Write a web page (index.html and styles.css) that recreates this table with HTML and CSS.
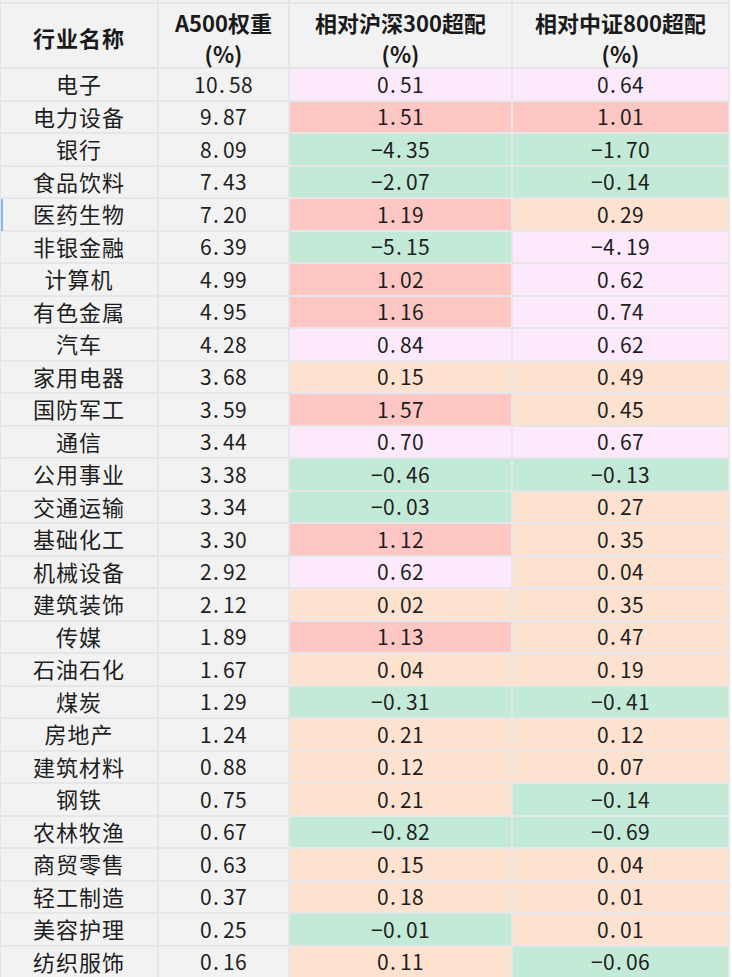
FILE: index.html
```html
<!DOCTYPE html>
<html lang="zh-CN">
<head>
<meta charset="utf-8">
<title>A500 行业权重</title>
<link rel="stylesheet" href="styles.css">
</head>
<body>
<div class="sheet">
  <div class="cap"></div><div class="cap"></div><div class="cap"></div><div class="cap"></div>

  <div class="hd hd-first"><span>行业名称</span></div>
  <div class="hd"><span>A500权重</span><span>(%)</span></div>
  <div class="hd"><span>相对沪深300超配</span><span>(%)</span></div>
  <div class="hd"><span>相对中证800超配</span><span>(%)</span></div>

  <div class="nm">电子</div><div class="num">10<span class="p">.</span>58</div><div class="num lav">0<span class="p">.</span>51</div><div class="num lav">0<span class="p">.</span>64</div>
  <div class="nm">电力设备</div><div class="num">9<span class="p">.</span>87</div><div class="num red">1<span class="p">.</span>51</div><div class="num red">1<span class="p">.</span>01</div>
  <div class="nm">银行</div><div class="num">8<span class="p">.</span>09</div><div class="num grn">−4<span class="p">.</span>35</div><div class="num grn">−1<span class="p">.</span>70</div>
  <div class="nm">食品饮料</div><div class="num">7<span class="p">.</span>43</div><div class="num grn">−2<span class="p">.</span>07</div><div class="num grn">−0<span class="p">.</span>14</div>
  <div class="nm sel">医药生物</div><div class="num">7<span class="p">.</span>20</div><div class="num red">1<span class="p">.</span>19</div><div class="num pch">0<span class="p">.</span>29</div>
  <div class="nm">非银金融</div><div class="num">6<span class="p">.</span>39</div><div class="num grn">−5<span class="p">.</span>15</div><div class="num lav">−4<span class="p">.</span>19</div>
  <div class="nm">计算机</div><div class="num">4<span class="p">.</span>99</div><div class="num red">1<span class="p">.</span>02</div><div class="num lav">0<span class="p">.</span>62</div>
  <div class="nm">有色金属</div><div class="num">4<span class="p">.</span>95</div><div class="num red">1<span class="p">.</span>16</div><div class="num lav">0<span class="p">.</span>74</div>
  <div class="nm">汽车</div><div class="num">4<span class="p">.</span>28</div><div class="num lav">0<span class="p">.</span>84</div><div class="num lav">0<span class="p">.</span>62</div>
  <div class="nm">家用电器</div><div class="num">3<span class="p">.</span>68</div><div class="num pch">0<span class="p">.</span>15</div><div class="num pch">0<span class="p">.</span>49</div>
  <div class="nm">国防军工</div><div class="num">3<span class="p">.</span>59</div><div class="num red">1<span class="p">.</span>57</div><div class="num pch">0<span class="p">.</span>45</div>
  <div class="nm">通信</div><div class="num">3<span class="p">.</span>44</div><div class="num lav">0<span class="p">.</span>70</div><div class="num lav">0<span class="p">.</span>67</div>
  <div class="nm">公用事业</div><div class="num">3<span class="p">.</span>38</div><div class="num grn">−0<span class="p">.</span>46</div><div class="num grn">−0<span class="p">.</span>13</div>
  <div class="nm">交通运输</div><div class="num">3<span class="p">.</span>34</div><div class="num grn">−0<span class="p">.</span>03</div><div class="num pch">0<span class="p">.</span>27</div>
  <div class="nm">基础化工</div><div class="num">3<span class="p">.</span>30</div><div class="num red">1<span class="p">.</span>12</div><div class="num pch">0<span class="p">.</span>35</div>
  <div class="nm">机械设备</div><div class="num">2<span class="p">.</span>92</div><div class="num lav">0<span class="p">.</span>62</div><div class="num pch">0<span class="p">.</span>04</div>
  <div class="nm">建筑装饰</div><div class="num">2<span class="p">.</span>12</div><div class="num pch">0<span class="p">.</span>02</div><div class="num pch">0<span class="p">.</span>35</div>
  <div class="nm">传媒</div><div class="num">1<span class="p">.</span>89</div><div class="num red">1<span class="p">.</span>13</div><div class="num pch">0<span class="p">.</span>47</div>
  <div class="nm">石油石化</div><div class="num">1<span class="p">.</span>67</div><div class="num pch">0<span class="p">.</span>04</div><div class="num pch">0<span class="p">.</span>19</div>
  <div class="nm">煤炭</div><div class="num">1<span class="p">.</span>29</div><div class="num grn">−0<span class="p">.</span>31</div><div class="num grn">−0<span class="p">.</span>41</div>
  <div class="nm">房地产</div><div class="num">1<span class="p">.</span>24</div><div class="num pch">0<span class="p">.</span>21</div><div class="num pch">0<span class="p">.</span>12</div>
  <div class="nm">建筑材料</div><div class="num">0<span class="p">.</span>88</div><div class="num pch">0<span class="p">.</span>12</div><div class="num pch">0<span class="p">.</span>07</div>
  <div class="nm">钢铁</div><div class="num">0<span class="p">.</span>75</div><div class="num pch">0<span class="p">.</span>21</div><div class="num grn">−0<span class="p">.</span>14</div>
  <div class="nm">农林牧渔</div><div class="num">0<span class="p">.</span>67</div><div class="num grn">−0<span class="p">.</span>82</div><div class="num grn">−0<span class="p">.</span>69</div>
  <div class="nm">商贸零售</div><div class="num">0<span class="p">.</span>63</div><div class="num pch">0<span class="p">.</span>15</div><div class="num pch">0<span class="p">.</span>04</div>
  <div class="nm">轻工制造</div><div class="num">0<span class="p">.</span>37</div><div class="num pch">0<span class="p">.</span>18</div><div class="num pch">0<span class="p">.</span>01</div>
  <div class="nm">美容护理</div><div class="num">0<span class="p">.</span>25</div><div class="num grn">−0<span class="p">.</span>01</div><div class="num pch">0<span class="p">.</span>01</div>
  <div class="nm">纺织服饰</div><div class="num">0<span class="p">.</span>16</div><div class="num pch">0<span class="p">.</span>11</div><div class="num grn">−0<span class="p">.</span>06</div>
</div>
</body>
</html>
```
FILE: styles.css
```css
html, body {
  margin: 0;
  padding: 0;
  background: #ffffff;
}

body {
  font-family: "Noto Sans CJK SC", "Noto Sans", sans-serif;
  color: #1e1e1e;
  overflow: hidden;
}

.sheet {
  display: grid;
  grid-template-columns: 158px 131px 223px 217px;
  grid-template-rows: 4px 65px;
  grid-auto-rows: 32.5px;
  width: 730px;
  border-left: 1px solid #e4e4e8;
  box-sizing: border-box;
}

.sheet > div {
  box-sizing: border-box;
  border-right: 2px solid #e6e6ea;
  border-bottom: 2px solid #e6e6ea;
  background: #f2f2f2;
}

.cap {
  height: 4px;
}

.hd {
  display: flex;
  flex-direction: column;
  align-items: center;
  justify-content: flex-start;
  padding-top: 3px;
  font-weight: 700;
  font-size: 22px;
  line-height: 31px;
  color: #1a1a1a;
}

.hd-first {
  justify-content: center;
  padding-top: 4px;
  letter-spacing: 1px;
}

.nm {
  display: flex;
  align-items: center;
  justify-content: center;
  font-size: 22px;
  letter-spacing: 1px;
  line-height: 30px;
  padding-bottom: 2px;
}

.num {
  display: flex;
  align-items: center;
  justify-content: center;
  font-size: 21px;
  letter-spacing: 0.3px;
  line-height: 30px;
  padding-bottom: 1px;
}

.p {
  margin: 0 4px 0 1px;
}

.sel {
  position: relative;
}

.sel::before {
  content: "";
  position: absolute;
  left: 0;
  top: 0;
  bottom: -1px;
  width: 2px;
  background: #8ab4f8;
}

.sheet > .lav { background: #fceafc; }
.sheet > .red { background: #ffc7c4; }
.sheet > .grn { background: #c3ead6; }
.sheet > .pch { background: #fee2d0; }
```
